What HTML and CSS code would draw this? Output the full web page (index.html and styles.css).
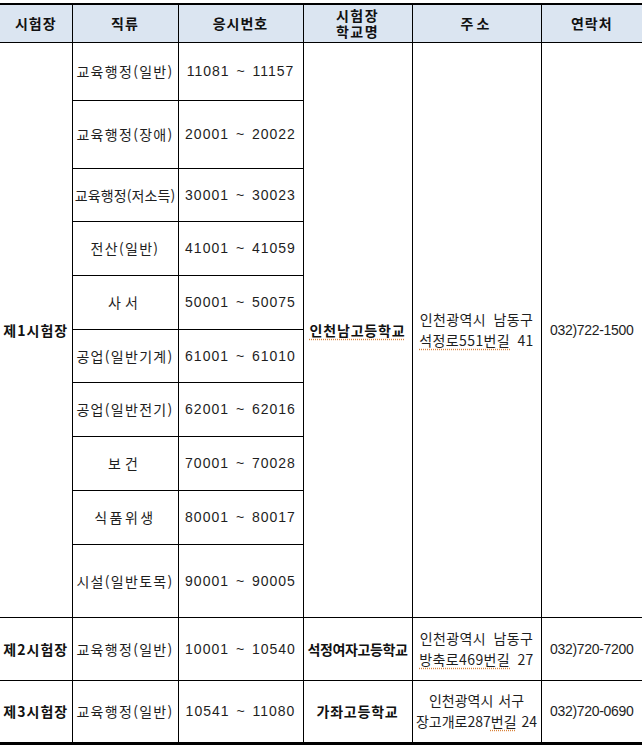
FILE: index.html
```html
<!DOCTYPE html>
<html lang="ko">
<head>
<meta charset="utf-8">
<title>시험장 안내</title>
<link rel="stylesheet" href="styles.css">
</head>
<body>
<table class="exam">
  <colgroup>
    <col class="c1"><col class="c2"><col class="c3"><col class="c4"><col class="c5"><col class="c6">
  </colgroup>
  <thead>
    <tr class="head">
      <th>시험장</th>
      <th>직류</th>
      <th>응시번호</th>
      <th class="two"><span class="ln">시험장</span><span class="ln">학교명</span></th>
      <th class="wide2">주소</th>
      <th>연락처</th>
    </tr>
  </thead>
  <tbody>
    <tr class="r58">
      <td class="site" rowspan="10">제1시험장</td>
      <td class="job">교육행정(일반)</td>
      <td class="num">11081 ~ 11157</td>
      <td class="school" rowspan="10"><span class="spell">인천남고등학교</span></td>
      <td class="addr" rowspan="10">인천광역시 남동구<br><span class="spell">석정로551번길</span> 41</td>
      <td class="tel" rowspan="10">032)722-1500</td>
    </tr>
    <tr class="r68"><td class="job">교육행정(장애)</td><td class="num">20001 ~ 20022</td></tr>
    <tr class="r53"><td class="job tight">교육행정(저소득)</td><td class="num">30001 ~ 30023</td></tr>
    <tr class="r54"><td class="job">전산(일반)</td><td class="num">41001 ~ 41059</td></tr>
    <tr class="r54"><td class="job wide">사서</td><td class="num">50001 ~ 50075</td></tr>
    <tr class="r53"><td class="job">공업(일반기계)</td><td class="num">61001 ~ 61010</td></tr>
    <tr class="r54"><td class="job">공업(일반전기)</td><td class="num">62001 ~ 62016</td></tr>
    <tr class="r54"><td class="job wide">보건</td><td class="num">70001 ~ 70028</td></tr>
    <tr class="r54"><td class="job mid">식품위생</td><td class="num">80001 ~ 80017</td></tr>
    <tr class="r73"><td class="job">시설(일반토목)</td><td class="num">90001 ~ 90005</td></tr>
    <tr class="r63">
      <td class="site">제2시험장</td>
      <td class="job">교육행정(일반)</td>
      <td class="num">10001 ~ 10540</td>
      <td class="school long">석정여자고등학교</td>
      <td class="addr">인천광역시 남동구<br><span class="spell">방축로469번길</span> 27</td>
      <td class="tel">032)720-7200</td>
    </tr>
    <tr class="r63">
      <td class="site">제3시험장</td>
      <td class="job">교육행정(일반)</td>
      <td class="num">10541 ~ 11080</td>
      <td class="school">가좌고등학교</td>
      <td class="addr narrow">인천광역시 서구<br>장고개로287<span class="spell">번길</span> 24</td>
      <td class="tel">032)720-0690</td>
    </tr>
  </tbody>
</table>
</body>
</html>
```

FILE: styles.css
```css
html, body {
  margin: 0;
  padding: 0;
  background: #ffffff;
}

body {
  padding-top: 3px;
  font-family: "Noto Sans CJK KR", "Noto Sans", sans-serif;
  color: #1e1e1e;
}

.exam {
  border-collapse: collapse;
  table-layout: fixed;
  width: 642px;
  border-top: 2px solid #000;
  border-bottom: 3px solid #000;
}

.c1 { width: 72px; }
.c2 { width: 106px; }
.c3 { width: 125px; }
.c4 { width: 109px; }
.c5 { width: 129px; }
.c6 { width: 101px; }

.exam th,
.exam td {
  border: 1px solid #000;
  padding: 0;
  text-align: center;
  vertical-align: middle;
  white-space: nowrap;
  overflow: hidden;
}

.exam tr > :first-child { border-left: none; }
.exam tr > :last-child { border-right: none; }

.head { height: 38px; }
.head th {
  background: #dbe5f1;
  font-size: 14px;
  font-weight: 700;
  letter-spacing: 1px;
  line-height: 16px;
  color: #111;
}
.head th.wide2 { letter-spacing: 3px; }
.head th.two { letter-spacing: 1.5px; }

.ln {
  display: block;
  height: 16px;
  line-height: 16px;
}

.r53 { height: 53px; }
.r54 { height: 54px; }
.r58 { height: 58px; }
.r63 { height: 63px; }
.r68 { height: 68px; }
.r73 { height: 73px; }

.site {
  font-size: 14px;
  font-weight: 700;
  letter-spacing: 1px;
  color: #111;
}

.job {
  font-size: 14px;
  letter-spacing: 1.3px;
}
.job.tight { letter-spacing: 0.1px; }
.job.wide { letter-spacing: 4px; }
.job.mid { letter-spacing: 2.5px; }

.num {
  font-family: "Liberation Sans", "Noto Sans CJK KR", sans-serif;
  font-size: 14px;
  letter-spacing: 1px;
  word-spacing: 2px;
}

.school {
  font-size: 14px;
  font-weight: 700;
  letter-spacing: 0.8px;
  color: #111;
}
.school.long { letter-spacing: -0.4px; }

.addr {
  font-size: 14px;
  line-height: 21px;
  letter-spacing: 0.4px;
  word-spacing: 3px;
}
.addr.narrow { letter-spacing: 0; word-spacing: 1px; }

.tel {
  font-family: "Liberation Sans", "Noto Sans CJK KR", sans-serif;
  font-size: 14px;
  letter-spacing: -0.3px;
  text-align: left;
  padding-left: 7px;
}

.spell {
  text-decoration: underline dotted #d9843c;
  text-underline-offset: 3px;
}
```
